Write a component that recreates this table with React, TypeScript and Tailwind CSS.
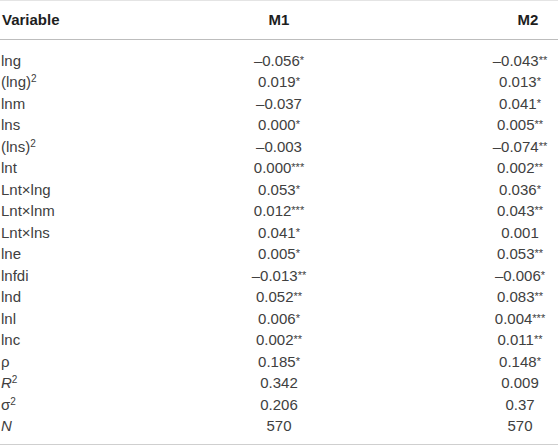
import type { ReactNode } from "react";

type Row = { label: ReactNode; m1: string; m1s?: string; m2: string; m2s?: string };

const sq = <sup className="text-[10px] leading-none">2</sup>;

const rows: Row[] = [
  { label: "lng", m1: "–0.056", m1s: "*", m2: "–0.043", m2s: "**" },
  { label: <>(lng){sq}</>, m1: "0.019", m1s: "*", m2: "0.013", m2s: "*" },
  { label: "lnm", m1: "–0.037", m2: "0.041", m2s: "*" },
  { label: "lns", m1: "0.000", m1s: "*", m2: "0.005", m2s: "**" },
  { label: <>(lns){sq}</>, m1: "–0.003", m2: "–0.074", m2s: "**" },
  { label: "lnt", m1: "0.000", m1s: "***", m2: "0.002", m2s: "**" },
  { label: "Lnt×lng", m1: "0.053", m1s: "*", m2: "0.036", m2s: "*" },
  { label: "Lnt×lnm", m1: "0.012", m1s: "***", m2: "0.043", m2s: "**" },
  { label: "Lnt×lns", m1: "0.041", m1s: "*", m2: "0.001" },
  { label: "lne", m1: "0.005", m1s: "*", m2: "0.053", m2s: "**" },
  { label: "lnfdi", m1: "–0.013", m1s: "**", m2: "–0.006", m2s: "*" },
  { label: "lnd", m1: "0.052", m1s: "**", m2: "0.083", m2s: "**" },
  { label: "lnl", m1: "0.006", m1s: "*", m2: "0.004", m2s: "***" },
  { label: "lnc", m1: "0.002", m1s: "**", m2: "0.011", m2s: "**" },
  { label: "ρ", m1: "0.185", m1s: "*", m2: "0.148", m2s: "*" },
  { label: <><i>R</i>{sq}</>, m1: "0.342", m2: "0.009" },
  { label: <>σ{sq}</>, m1: "0.206", m2: "0.37" },
  { label: <i>N</i>, m1: "570", m2: "570" },
];

function Val({ v, s }: { v: string; s?: string }) {
  return (
    <>
      {v}
      {s && <sup className="text-[11px] leading-none top-[-2px]">{s}</sup>}
    </>
  );
}

export default function App() {
  return (
    <div
      className="w-[558px] h-[446px] bg-white text-[15px] text-[#404040]"
      style={{ fontFamily: '"Liberation Sans", Arial, sans-serif' }}
    >
      <div className="border-t border-[#e4e4e4]">
        <div className="flex pt-[8px] pb-[8px] border-b border-[#bdbdbd] font-bold text-[#1e1e1e] leading-[21.5px]">
          <div className="flex-1 pl-[2px]">Variable</div>
          <div className="w-[98px] text-center">M1</div>
          <div className="w-[154px]" />
          <div className="w-[76px] text-center pl-[16px]">M2</div>
        </div>
        <div className="pt-[10px] pb-[7px] border-b border-[#cfcfcf]">
          {rows.map((r, i) => (
            <div key={i} className="flex h-[21.5px] leading-[21.5px]">
              <div className="flex-1 pl-[1px]">{r.label}</div>
              <div className="w-[98px] text-center">
                <Val v={r.m1} s={r.m1s} />
              </div>
              <div className="w-[154px]" />
              <div className="w-[76px] text-center">
                <Val v={r.m2} s={r.m2s} />
              </div>
            </div>
          ))}
        </div>
      </div>
    </div>
  );
}
